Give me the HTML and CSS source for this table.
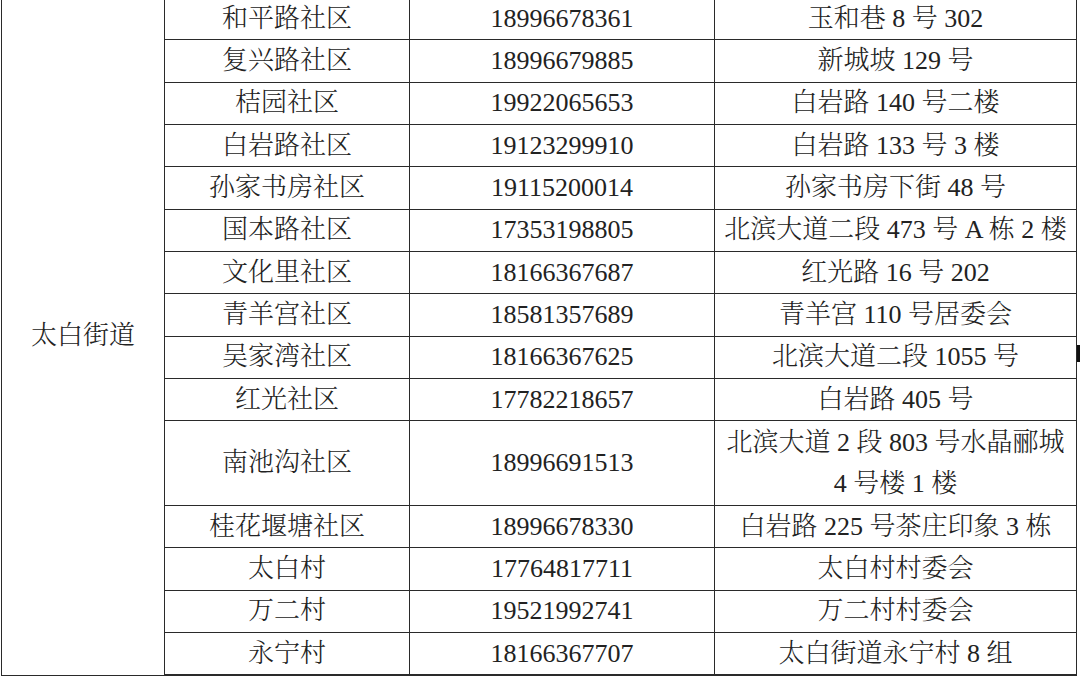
FILE: index.html
```html
<!DOCTYPE html>
<html lang="zh-CN">
<head>
<meta charset="utf-8">
<title>太白街道社区联系方式</title>
<link rel="stylesheet" href="styles.css">
</head>
<body>
<div class="page">
<table class="grid">
  <colgroup>
    <col class="c1"><col class="c2"><col class="c3"><col class="c4">
  </colgroup>
  <tbody>
    <tr><td class="street" rowspan="15">太白街道</td><td>和平路社区</td><td>18996678361</td><td>玉和巷 8 号 302</td></tr>
    <tr><td>复兴路社区</td><td>18996679885</td><td>新城坡 129 号</td></tr>
    <tr><td>桔园社区</td><td>19922065653</td><td>白岩路 140 号二楼</td></tr>
    <tr><td>白岩路社区</td><td>19123299910</td><td>白岩路 133 号 3 楼</td></tr>
    <tr><td>孙家书房社区</td><td>19115200014</td><td>孙家书房下街 48 号</td></tr>
    <tr><td>国本路社区</td><td>17353198805</td><td>北滨大道二段 473 号 A 栋 2 楼</td></tr>
    <tr><td>文化里社区</td><td>18166367687</td><td>红光路 16 号 202</td></tr>
    <tr><td>青羊宫社区</td><td>18581357689</td><td>青羊宫 110 号居委会</td></tr>
    <tr><td>吴家湾社区</td><td>18166367625</td><td>北滨大道二段 1055 号</td></tr>
    <tr><td>红光社区</td><td>17782218657</td><td>白岩路 405 号</td></tr>
    <tr class="tall"><td>南池沟社区</td><td>18996691513</td><td>北滨大道 2 段 803 号水晶郦城<br>4 号楼 1 楼</td></tr>
    <tr><td>桂花堰塘社区</td><td>18996678330</td><td>白岩路 225 号茶庄印象 3 栋</td></tr>
    <tr><td>太白村</td><td>17764817711</td><td>太白村村委会</td></tr>
    <tr><td>万二村</td><td>19521992741</td><td>万二村村委会</td></tr>
    <tr><td>永宁村</td><td>18166367707</td><td>太白街道永宁村 8 组</td></tr>
  </tbody>
</table>
<div class="edge-mark"></div>
</div>
</body>
</html>
```
FILE: styles.css
```css
html, body {
  margin: 0;
  padding: 0;
  background: #ffffff;
}

.page {
  position: relative;
  width: 1080px;
  height: 676px;
  overflow: hidden;
}

.grid {
  border-collapse: collapse;
  table-layout: fixed;
  width: 1076px;
  margin: -3px 0 0 1px;
  font-family: "Liberation Serif", "Noto Serif CJK SC", "Noto Sans CJK SC", serif;
  font-size: 26px;
  font-weight: 300;
  color: #222222;
}

.c1 { width: 163px; }
.c2 { width: 245px; }
.c3 { width: 305px; }
.c4 { width: 362px; }

.grid td {
  border: 1px solid #2a2a2a;
  padding: 0;
  height: 41.33px;
  line-height: 40px;
  text-align: center;
  vertical-align: middle;
  white-space: nowrap;
  overflow: hidden;
}

.grid tr:last-child td {
  border-bottom: 2px solid #2a2a2a;
}

.grid .tall td {
  height: 83.67px;
  line-height: 41.5px;
}

.edge-mark {
  position: absolute;
  left: 1077px;
  top: 345px;
  width: 3px;
  height: 17px;
  background: #111111;
}
```
